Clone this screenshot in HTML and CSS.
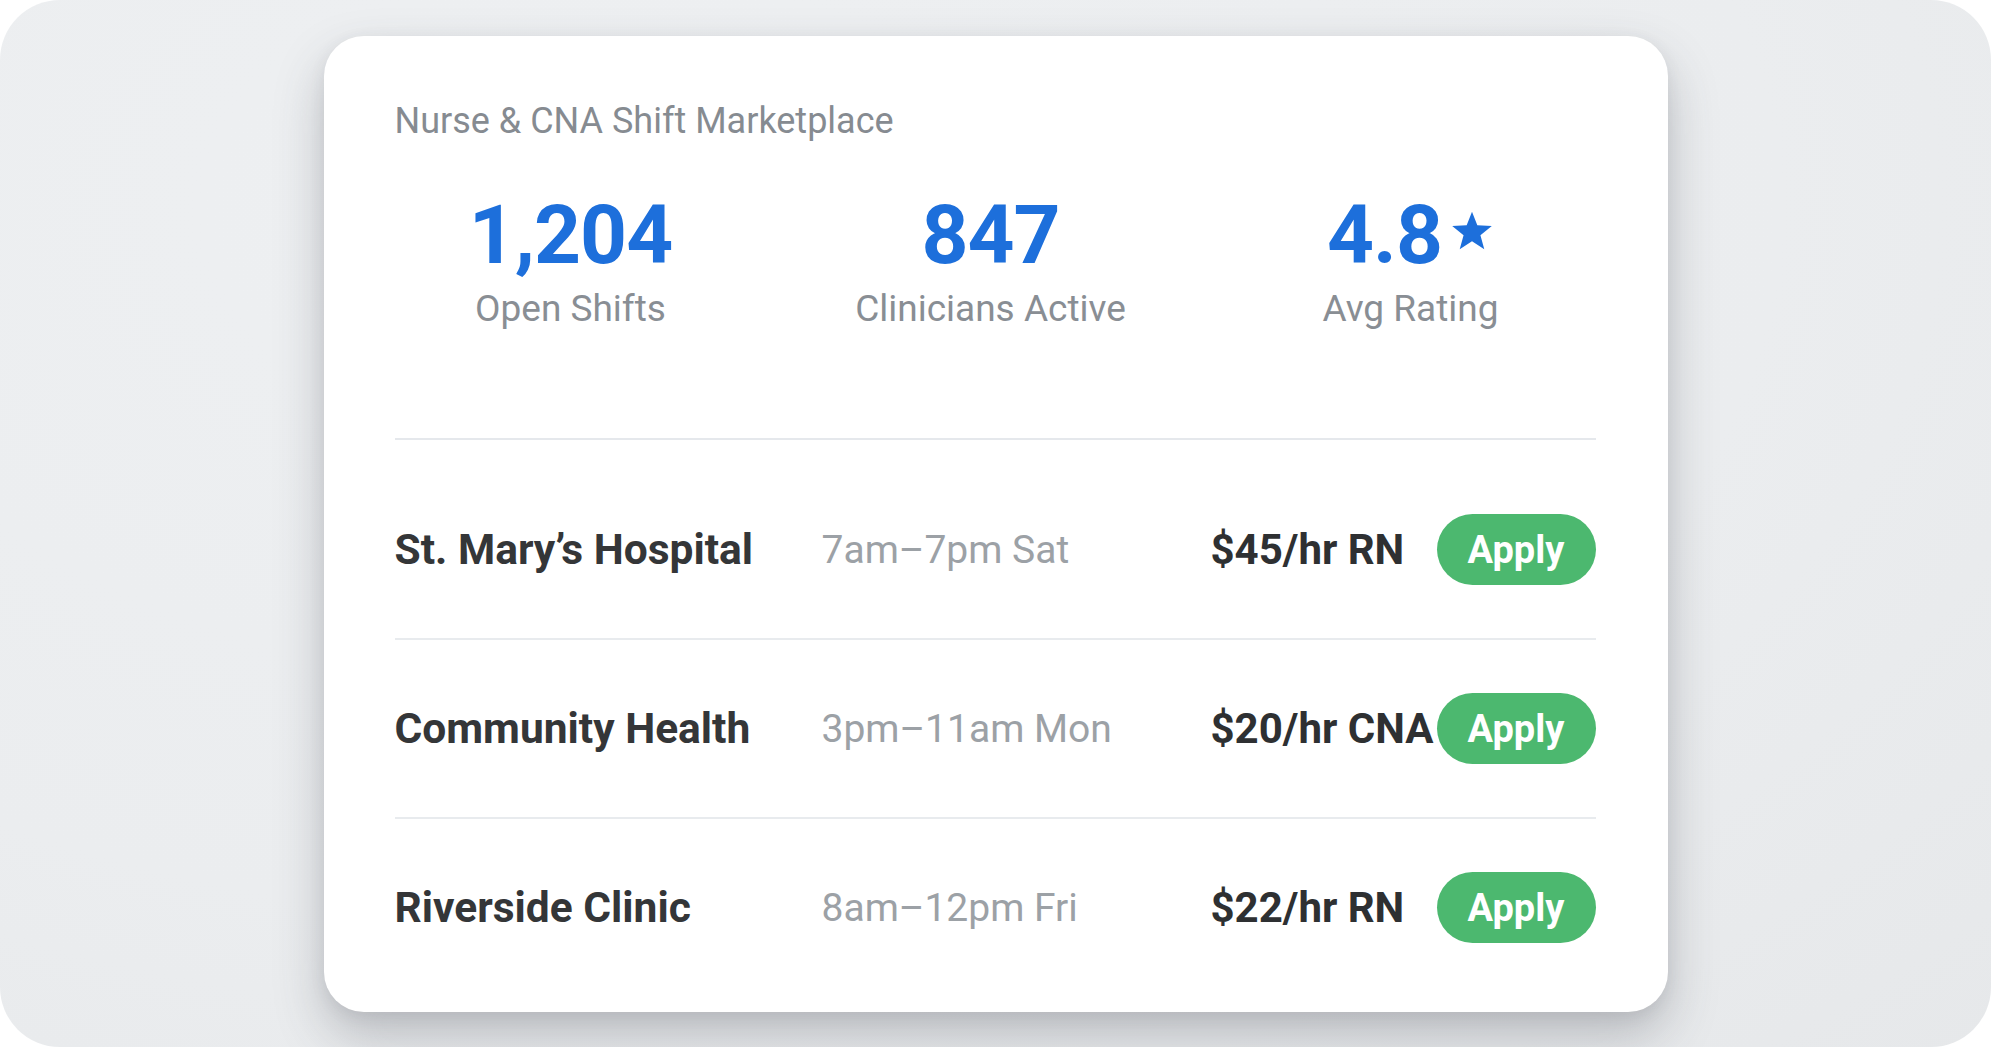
FILE: index.html
```html
<!DOCTYPE html>
<html>
	<head>
		<meta charset="utf-8">
		<title>Nurse &amp; CNA Shift Marketplace</title>
		<link rel="stylesheet" href="styles.css">
	</head>
	<body>
<div class="frame">
	<div class="card">
		<h1 class="title">Nurse &amp; CNA Shift Marketplace</h1>

		<div class="stats">
			<div class="stat">
				<div class="value">1,204</div>
				<div class="label">Open Shifts</div>
			</div>
			<div class="stat">
				<div class="value">847</div>
				<div class="label">Clinicians Active</div>
			</div>
			<div class="stat">
				<div class="value">4.8<svg class="star" viewBox="0 0 24 24"><polygon points="12,1.5 14.9,8.9 22.8,9.3 16.6,14.3 18.7,22 12,17.6 5.3,22 7.4,14.3 1.2,9.3 9.1,8.9"/></svg></div>
				<div class="label">Avg Rating</div>
			</div>
		</div>

		<div class="shifts">
			<div class="shift">
				<div class="place">St. Mary’s Hospital</div>
				<div class="hours">7am–7pm Sat</div>
				<div class="pay">$45/hr RN</div>
				<button class="apply">Apply</button>
			</div>
			<div class="shift">
				<div class="place">Community Health</div>
				<div class="hours">3pm–11am Mon</div>
				<div class="pay">$20/hr CNA</div>
				<button class="apply">Apply</button>
			</div>
			<div class="shift">
				<div class="place">Riverside Clinic</div>
				<div class="hours">8am–12pm Fri</div>
				<div class="pay">$22/hr RN</div>
				<button class="apply">Apply</button>
			</div>
		</div>
	</div>
</div>
	</body>
</html>
```

FILE: styles.css
```css
html, body {
	margin: 0;
	height: 100%;
	background: #fff;
	}
body {
	font-family: Roboto, "Liberation Sans", sans-serif;
	}
.frame {
	background: radial-gradient(ellipse at 30% 20%, #eef0f2 0%, #ebedef 60%, #e6e8ea 100%);
	border-radius: 60px;
	box-sizing: border-box;
	display: flex;
	height: 100%;
	justify-content: center;
	padding-top: 36px;
	}
.card {
	background: #fff;
	border-radius: 40px;
	box-shadow: 0 24px 50px rgba(60, 66, 74, 0.28), 0 4px 16px rgba(60, 66, 74, 0.08);
	box-sizing: border-box;
	height: 976px;
	padding: 64px 72px 15px 71px;
	width: 1344px;
	}
.title {
	color: #868b91;
	font-size: 36px;
	font-weight: 400;
	line-height: 42px;
	margin: 0;
	}

/* headline figures */
.stats {
	border-bottom: 2px solid #e5e8ec;
	display: grid;
	gap: 68px;
	grid-template-columns: repeat(3, 352px);
	margin-top: 52px;
	padding-bottom: 107px;
	}
.stat {
	text-align: center;
	}
.value {
	color: #1d6fdb;
	font-size: 82px;
	font-weight: 700;
	letter-spacing: -1px;
	line-height: 82px;
	}
.star {
	fill: #1d6fdb;
	height: 44px;
	margin-left: 8px;
	vertical-align: 10px;
	width: 44px;
	}
.label {
	color: #898e94;
	font-size: 37px;
	line-height: 44px;
	margin-top: 11px;
	}

/* shift rows */
.shifts {
	margin-top: 21px;
	}
.shift {
	align-items: center;
	display: grid;
	grid-template-columns: 427px 386px minmax(0, 1fr) 159px;
	height: 177px;
	}
.shift + .shift {
	border-top: 2px solid #e8ebee;
	}
.place {
	color: #343638;
	font-size: 42.5px;
	font-weight: 700;
	}
.hours {
	color: #9ca1a6;
	font-size: 39px;
	}
.pay {
	color: #2e3032;
	font-size: 42px;
	font-weight: 700;
	padding-left: 3px;
	white-space: nowrap;
	}
.apply {
	background: #4cb86f;
	border: 0;
	border-radius: 36px;
	color: #fff;
	font-family: inherit;
	font-size: 38px;
	font-weight: 700;
	height: 71px;
	padding: 0;
	width: 159px;
	}
```
